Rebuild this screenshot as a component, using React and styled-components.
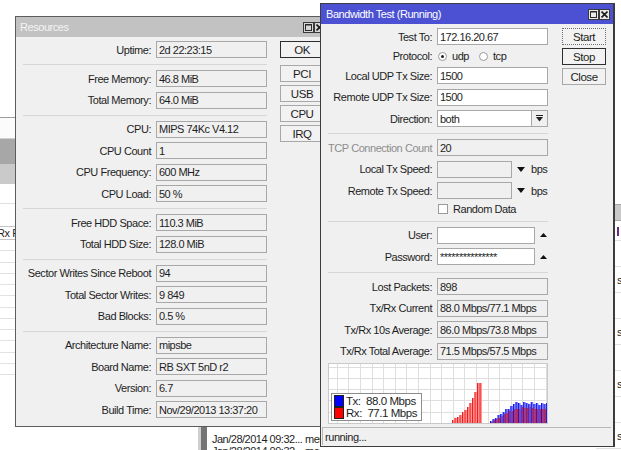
import React from 'react';
import styled, { createGlobalStyle } from 'styled-components';

const GlobalStyle = createGlobalStyle`
  html, body { margin: 0; padding: 0; background: #ffffff; }
  body { overflow: hidden; }
  * { box-sizing: border-box; }
`;

const Desktop = styled.div`
  position: relative;
  width: 621px;
  height: 450px;
  overflow: hidden;
  background: #ffffff;
  font-family: "Liberation Sans", Arial, sans-serif;
  font-size: 11px;
  letter-spacing: -0.45px;
  color: #1e1e1e;
`;

/* ---------- background windows ---------- */
const LeftList = styled.div`
  position: absolute;
  left: -40px;
  top: 117px;
  width: 80px;
  display: flex;
  flex-direction: column;
`;
const ListLine = styled.div`
  height: 1px;
  background: ${p => p.$c || '#9c9c9c'};
`;
const ListBand = styled.div`
  height: ${p => p.$h}px;
  background: ${p => p.$bg || '#ffffff'};
  border-bottom: ${p => (p.$line ? `1px solid ${p.$line}` : 'none')};
`;
const ListHeader = styled.div`
  height: 14px;
  border-top: 1px solid #c4c4c4;
  border-bottom: 1px solid #c4c4c4;
  background: #ffffff;
  padding-left: 37px;
  line-height: 12px;
  white-space: nowrap;
  overflow: hidden;
`;
const ListRow = styled.div`
  height: 11.25px;
  border-bottom: 1px solid #e2e2e2;
  background: #ffffff;
`;

const RightList = styled.div`
  position: absolute;
  left: 596px;
  top: 204px;
  width: 40px;
  display: flex;
  flex-direction: column;
`;
const RightRow = styled.div`
  height: ${p => p.$h}px;
  border-bottom: 1px solid #e0e0e0;
  padding-left: 21px;
  line-height: ${p => p.$h}px;
  white-space: nowrap;
  overflow: hidden;
`;
const PurpleMark = styled.span`
  display: inline-block;
  width: 2px;
  height: 9px;
  margin-top: 6px;
  background: #6b2a86;
  vertical-align: top;
`;

const LogWindow = styled.div`
  position: absolute;
  left: 198px;
  top: 427px;
  width: 122px;
  height: 30px;
  display: flex;
  overflow: hidden;
  background: #ffffff;
`;
const LogScroll = styled.div`
  width: 9px;
  flex: none;
  border-left: 3px solid #cfcfcf;
  background: #757575;
`;
const LogList = styled.div`
  display: flex;
  flex-direction: column;
  padding: 6px 0 0 5px;
  line-height: 12px;
  font-size: 11px;
  letter-spacing: -0.5px;
`;
const LogRow = styled.div`
  display: flex;
  white-space: nowrap;
`;
const LogTime = styled.span`
  width: 93px;
  flex: none;
`;
const LogMsg = styled.span`
  width: 16px;
  overflow: hidden;
`;

/* ---------- windows ---------- */
const Win = styled.div`
  position: absolute;
  display: flex;
  flex-direction: column;
  background: #f0f0f0;
  border: 1px solid #5c5c5c;
`;
const ResourcesWin = styled(Win)`
  left: 15px;
  top: 16px;
  width: 316px;
  height: 411px;
`;
const BandwidthWin = styled(Win)`
  left: 320px;
  top: 3px;
  width: 295px;
  height: 444px;
  border-color: #3c3c3c;
  border-right-width: 2px;
`;

const TitleBar = styled.div`
  height: 20px;
  flex: none;
  display: flex;
  align-items: center;
  justify-content: space-between;
  padding: 0 ${p => (p.$active ? 3 : 5)}px 0 ${p => (p.$active ? 5 : 4)}px;
  background: ${p => (p.$active ? '#4b51d2' : '#c2c2c2')};
  color: ${p => (p.$active ? '#ffffff' : '#f4f4f4')};
  font-size: 11px;
  white-space: nowrap;
`;
const TitleIcons = styled.div`
  display: flex;
  gap: 0px;
`;
const TitleIcon = styled.span`
  width: 11px;
  height: 11px;
  display: flex;
  align-items: center;
  justify-content: center;
  border: 1px solid #3a3a3a;
  background: ${p => (p.$active ? '#eaeaea' : '#d6d6d6')};
`;

const Content = styled.div`
  display: flex;
  align-items: flex-start;
  gap: ${p => p.$gap}px;
  padding: 4px 0 0 7px;
`;
const Form = styled.div`
  display: flex;
  flex-direction: column;
  width: ${p => p.$w}px;
  flex: none;
`;
const Section = styled.div`
  display: grid;
  grid-template-columns: ${p => p.$label}px 111px;
  column-gap: 5px;
  row-gap: 4.5px;
  align-items: center;
`;
const Label = styled.div`
  display: flex;
  justify-content: flex-end;
  white-space: nowrap;
  color: ${p => (p.$disabled ? '#8d8d8d' : '#1e1e1e')};
`;
const Field = styled.div`
  height: 17px;
  width: ${p => (p.$w ? `${p.$w}px` : 'auto')};
  border: 1px solid #a8a8a8;
  background: ${p => (p.$white ? '#ffffff' : '#f0f0f0')};
  padding: 0 2px;
  display: flex;
  align-items: center;
  white-space: nowrap;
  overflow: hidden;
  letter-spacing: -0.5px;
`;
const FieldGroup = styled.div`
  display: flex;
  align-items: center;
  height: 17px;
`;
const DropBtn = styled.div`
  width: 16px;
  height: 17px;
  border: 1px solid #a8a8a8;
  border-left: none;
  background: #f0f0f0;
  display: flex;
  align-items: center;
  justify-content: center;
`;
const Arrow = styled.span`
  display: flex;
  margin-left: ${p => p.$ml}px;
`;
const Unit = styled.span`
  margin-left: 6px;
`;
const Sep = styled.div`
  height: 1px;
  background: #d6d6d6;
  margin: ${p => p.$mt || 6}px 0 5px;
`;
const RadioRow = styled.div`
  height: 13px;
  display: flex;
  align-items: center;
`;
const RadioItem = styled.label`
  display: flex;
  align-items: center;
  margin-left: ${p => p.$ml}px;
`;
const Radio = styled.span`
  width: 9px;
  height: 9px;
  border-radius: 50%;
  border: 1px solid #9a9a9a;
  background: #ffffff;
  display: flex;
  align-items: center;
  justify-content: center;
  margin-right: 5px;
  &::after {
    content: '';
    width: 3px;
    height: 3px;
    border-radius: 50%;
    background: ${p => (p.$on ? '#1e1e1e' : 'transparent')};
  }
`;
const CheckRow = styled.div`
  height: 11px;
  display: flex;
  align-items: center;
  padding-left: 1px;
`;
const Check = styled.span`
  width: 10px;
  height: 10px;
  border: 1px solid #9a9a9a;
  background: #ffffff;
  margin-right: 5px;
`;

const ButtonCol = styled.div`
  display: flex;
  flex-direction: column;
  gap: 3px;
  width: 44px;
  flex: none;
`;
const Btn = styled.div`
  height: 17px;
  border: 1px ${p => (p.$focus ? 'dotted' : 'solid')} ${p => (p.$default ? '#2e2e2e' : p.$focus ? '#6e6e6e' : '#a8a8a8')};
  background: #f2f2f2;
  display: flex;
  align-items: center;
  justify-content: center;
  font-size: 11.5px;
  margin-bottom: ${p => p.$mb || 0}px;
`;

const Chart = styled.div`
  position: relative;
  height: 61px;
  margin-top: 3px;
  border: 1px solid #c9c9c9;
  background: #ffffff;
  svg { display: block; }
`;
const Legend = styled.div`
  position: absolute;
  left: 2px;
  bottom: 2px;
  width: 91px;
  height: 28px;
  border: 1px solid #8c8c8c;
  background: #ffffff;
  padding: 1px 2px;
  display: flex;
  flex-direction: column;
`;
const LegendItem = styled.div`
  display: flex;
  align-items: center;
  height: 12px;
  font-size: 11.5px;
  white-space: pre;
`;
const Swatch = styled.span`
  width: 10px;
  height: 12px;
  background: ${p => p.$c};
  border: 1px solid #202020;
  margin-right: 2px;
`;

const StatusBar = styled.div`
  margin: auto 2px 1px 1px;
  height: 18px;
  border-top: 1px solid #b8b8b8;
  border-left: 1px solid #b8b8b8;
  padding-left: 2px;
  display: flex;
  align-items: center;
`;

/* ---------- drawings ---------- */
const MaxIcon = () => (
  <svg width="7" height="7" viewBox="0 0 7 7">
    <rect x="0.5" y="0.5" width="6" height="6" fill="none" stroke="#2a2a2a" strokeWidth="1" />
    <rect x="0" y="0" width="7" height="1.5" fill="#2a2a2a" />
  </svg>
);
const CloseIcon = () => (
  <svg width="7" height="7" viewBox="0 0 7 7">
    <path d="M0.5 0.5 L6.5 6.5 M6.5 0.5 L0.5 6.5" stroke="#1a1a1a" strokeWidth="1.6" />
  </svg>
);
const DirIcon = () => (
  <svg width="7" height="7" viewBox="0 0 7 7">
    <rect x="0" y="0" width="7" height="1" fill="#222" />
    <path d="M0 2 L7 2 L3.5 6.5 Z" fill="#222" />
  </svg>
);
const DownTri = () => (
  <svg width="8" height="5" viewBox="0 0 8 5">
    <path d="M0 0 L8 0 L4 5 Z" fill="#111" />
  </svg>
);
const UpTri = () => (
  <svg width="7" height="4" viewBox="0 0 7 4">
    <path d="M0 4 L7 4 L3.5 0 Z" fill="#111" />
  </svg>
);

const W = 218;
const H = 59;
const redSpike = [3, 5, 6, 8, 11, 13, 16, 20, 25, 31, 40, 40];
const rnd = i => {
  const s = Math.sin(i * 12.9898) * 43758.5453;
  return s - Math.floor(s);
};

const ChartDrawing = () => {
  const vlines = [];
  for (let x = W - 1.5; x > 0; x -= 11.6) vlines.push(x);
  const hlines = [];
  for (let y = H - 11.5; y > 0; y -= 11.2) hlines.push(y);
  const bars = [];
  redSpike.forEach((h, i) => {
    const x = 123 + i * 2.5;
    bars.push(<rect key={`rs${i}`} x={x} y={H - h} width="2.4" height={h} fill="#ff8a8a" />);
    bars.push(<rect key={`rl${i}`} x={x} y={H - h} width="1" height={h} fill="#ee1c1c" />);
  });
  for (let i = 0; i < 23; i++) {
    const x = 161 + i * 2.55;
    const t = Math.min(1, i / 9);
    const hb = Math.round(2 + 17 * t + (rnd(i) - 0.5) * 4 * t);
    const hr = Math.round(1 + 14 * t + (rnd(i + 40) - 0.5) * 3 * t);
    bars.push(<rect key={`bb${i}`} x={x} y={H - hb} width="2.5" height={hb} fill="#7b7bff" />);
    bars.push(<rect key={`bd${i}`} x={x} y={H - hb} width="1" height={hb} fill="#1414e6" />);
    bars.push(<rect key={`rr${i}`} x={x + 1.2} y={H - hr} width="1.3" height={hr} fill="#e41d1d" />);
  }
  return (
    <svg width={W} height={H} viewBox={`0 0 ${W} ${H}`}>
      {vlines.map(x => (
        <rect key={`v${x}`} x={Math.round(x)} y="0" width="1" height={H} fill="#dedede" />
      ))}
      {hlines.map(y => (
        <rect key={`h${y}`} x="0" y={Math.round(y)} width={W} height="1" fill="#dedede" />
      ))}
      {bars}
    </svg>
  );
};

const Row = ({ label, children, disabled }) => (
  <>
    <Label $disabled={disabled}>{label}</Label>
    {children}
  </>
);

export default function App() {
  return (
    <Desktop>
      <GlobalStyle />

      <LeftList>
        <ListLine />
        <ListBand $h={21} $bg="#fbfbfb" $line="#cfcfcf" />
        <ListBand $h={25} $bg="#a7a7a7" />
        <ListBand $h={20} $bg="#cacaca" />
        <ListBand $h={20} $line="#e0e0e0" />
        <ListBand $h={22} />
        <ListHeader>Rx Packets</ListHeader>
        {Array.from({ length: 12 }).map((_, i) => (
          <ListRow key={i} />
        ))}
      </LeftList>

      <RightList>
        <ListLine $c="#a5a5a5" />
        <ListBand $h={16} $bg="#c9c9c9" $line="#a8a8a8" />
        <RightRow $h={20}>
          <PurpleMark />
        </RightRow>
        {['', 's', '', 's', '', 's', '', 's', ''].map((t, i) => (
          <RightRow key={i} $h={26}>
            {t}
          </RightRow>
        ))}
      </RightList>

      <LogWindow>
        <LogScroll />
        <LogList>
          <LogRow>
            <LogTime>Jan/28/2014 09:32...</LogTime>
            <LogMsg>memory</LogMsg>
          </LogRow>
          <LogRow>
            <LogTime>Jan/28/2014 09:32...</LogTime>
            <LogMsg>memory</LogMsg>
          </LogRow>
        </LogList>
      </LogWindow>

      <ResourcesWin>
        <TitleBar>
          <span>Resources</span>
          <TitleIcons>
            <TitleIcon>
              <MaxIcon />
            </TitleIcon>
            <TitleIcon>
              <CloseIcon />
            </TitleIcon>
          </TitleIcons>
        </TitleBar>
        <Content $gap={13}>
          <Form $w={244}>
            <Section $label={128}>
              <Row label="Uptime:"><Field>2d 22:23:15</Field></Row>
            </Section>
            <Sep />
            <Section $label={128}>
              <Row label="Free Memory:"><Field>46.8 MiB</Field></Row>
              <Row label="Total Memory:"><Field>64.0 MiB</Field></Row>
            </Section>
            <Sep />
            <Section $label={128}>
              <Row label="CPU:"><Field>MIPS 74Kc V4.12</Field></Row>
              <Row label="CPU Count"><Field>1</Field></Row>
              <Row label="CPU Frequency:"><Field>600 MHz</Field></Row>
              <Row label="CPU Load:"><Field>50 %</Field></Row>
            </Section>
            <Sep />
            <Section $label={128}>
              <Row label="Free HDD Space:"><Field>110.3 MiB</Field></Row>
              <Row label="Total HDD Size:"><Field>128.0 MiB</Field></Row>
            </Section>
            <Sep />
            <Section $label={128}>
              <Row label="Sector Writes Since Reboot"><Field>94</Field></Row>
              <Row label="Total Sector Writes:"><Field>9 849</Field></Row>
              <Row label="Bad Blocks:"><Field>0.5 %</Field></Row>
            </Section>
            <Sep />
            <Section $label={128}>
              <Row label="Architecture Name:"><Field>mipsbe</Field></Row>
              <Row label="Board Name:"><Field>RB SXT 5nD r2</Field></Row>
              <Row label="Version:"><Field>6.7</Field></Row>
              <Row label="Build Time:"><Field>Nov/29/2013 13:37:20</Field></Row>
            </Section>
          </Form>
          <ButtonCol>
            <Btn $default $mb={4}>OK</Btn>
            <Btn>PCI</Btn>
            <Btn>USB</Btn>
            <Btn>CPU</Btn>
            <Btn>IRQ</Btn>
          </ButtonCol>
        </Content>
      </ResourcesWin>

      <BandwidthWin>
        <TitleBar $active>
          <span>Bandwidth Test (Running)</span>
          <TitleIcons>
            <TitleIcon $active>
              <MaxIcon />
            </TitleIcon>
            <TitleIcon $active>
              <CloseIcon />
            </TitleIcon>
          </TitleIcons>
        </TitleBar>
        <Content $gap={14}>
          <Form $w={220}>
            <Section $label={104}>
              <Row label="Test To:"><Field $white>172.16.20.67</Field></Row>
              <Row label="Protocol:">
                <RadioRow>
                  <RadioItem $ml={1}><Radio $on />udp</RadioItem>
                  <RadioItem $ml={10}><Radio />tcp</RadioItem>
                </RadioRow>
              </Row>
              <Row label="Local UDP Tx Size:"><Field $white>1500</Field></Row>
              <Row label="Remote UDP Tx Size:"><Field $white>1500</Field></Row>
              <Row label="Direction:">
                <FieldGroup>
                  <Field $white $w={95}>both</Field>
                  <DropBtn><DirIcon /></DropBtn>
                </FieldGroup>
              </Row>
            </Section>
            <Sep />
            <Section $label={104}>
              <Row label="TCP Connection Count" disabled><Field>20</Field></Row>
              <Row label="Local Tx Speed:">
                <FieldGroup>
                  <Field $w={75} />
                  <Arrow $ml={5}><DownTri /></Arrow>
                  <Unit>bps</Unit>
                </FieldGroup>
              </Row>
              <Row label="Remote Tx Speed:">
                <FieldGroup>
                  <Field $w={75} />
                  <Arrow $ml={5}><DownTri /></Arrow>
                  <Unit>bps</Unit>
                </FieldGroup>
              </Row>
              <Row label="">
                <CheckRow><Check />Random Data</CheckRow>
              </Row>
            </Section>
            <Sep />
            <Section $label={104}>
              <Row label="User:">
                <FieldGroup>
                  <Field $white $w={98} />
                  <Arrow $ml={5}><UpTri /></Arrow>
                </FieldGroup>
              </Row>
              <Row label="Password:">
                <FieldGroup>
                  <Field $white $w={98}>***************</Field>
                  <Arrow $ml={5}><UpTri /></Arrow>
                </FieldGroup>
              </Row>
            </Section>
            <Sep $mt={7} />
            <Section $label={104}>
              <Row label="Lost Packets:"><Field>898</Field></Row>
              <Row label="Tx/Rx Current"><Field>88.0 Mbps/77.1 Mbps</Field></Row>
              <Row label="Tx/Rx 10s Average:"><Field>86.0 Mbps/73.8 Mbps</Field></Row>
              <Row label="Tx/Rx Total Average:"><Field>71.5 Mbps/57.5 Mbps</Field></Row>
            </Section>
            <Chart>
              <ChartDrawing />
              <Legend>
                <LegendItem><Swatch $c="#0000ff" />Tx:  88.0 Mbps</LegendItem>
                <LegendItem><Swatch $c="#ff0000" />Rx:  77.1 Mbps</LegendItem>
              </Legend>
            </Chart>
          </Form>
          <ButtonCol>
            <Btn $focus>Start</Btn>
            <Btn $default>Stop</Btn>
            <Btn>Close</Btn>
          </ButtonCol>
        </Content>
        <StatusBar>running...</StatusBar>
      </BandwidthWin>
    </Desktop>
  );
}
